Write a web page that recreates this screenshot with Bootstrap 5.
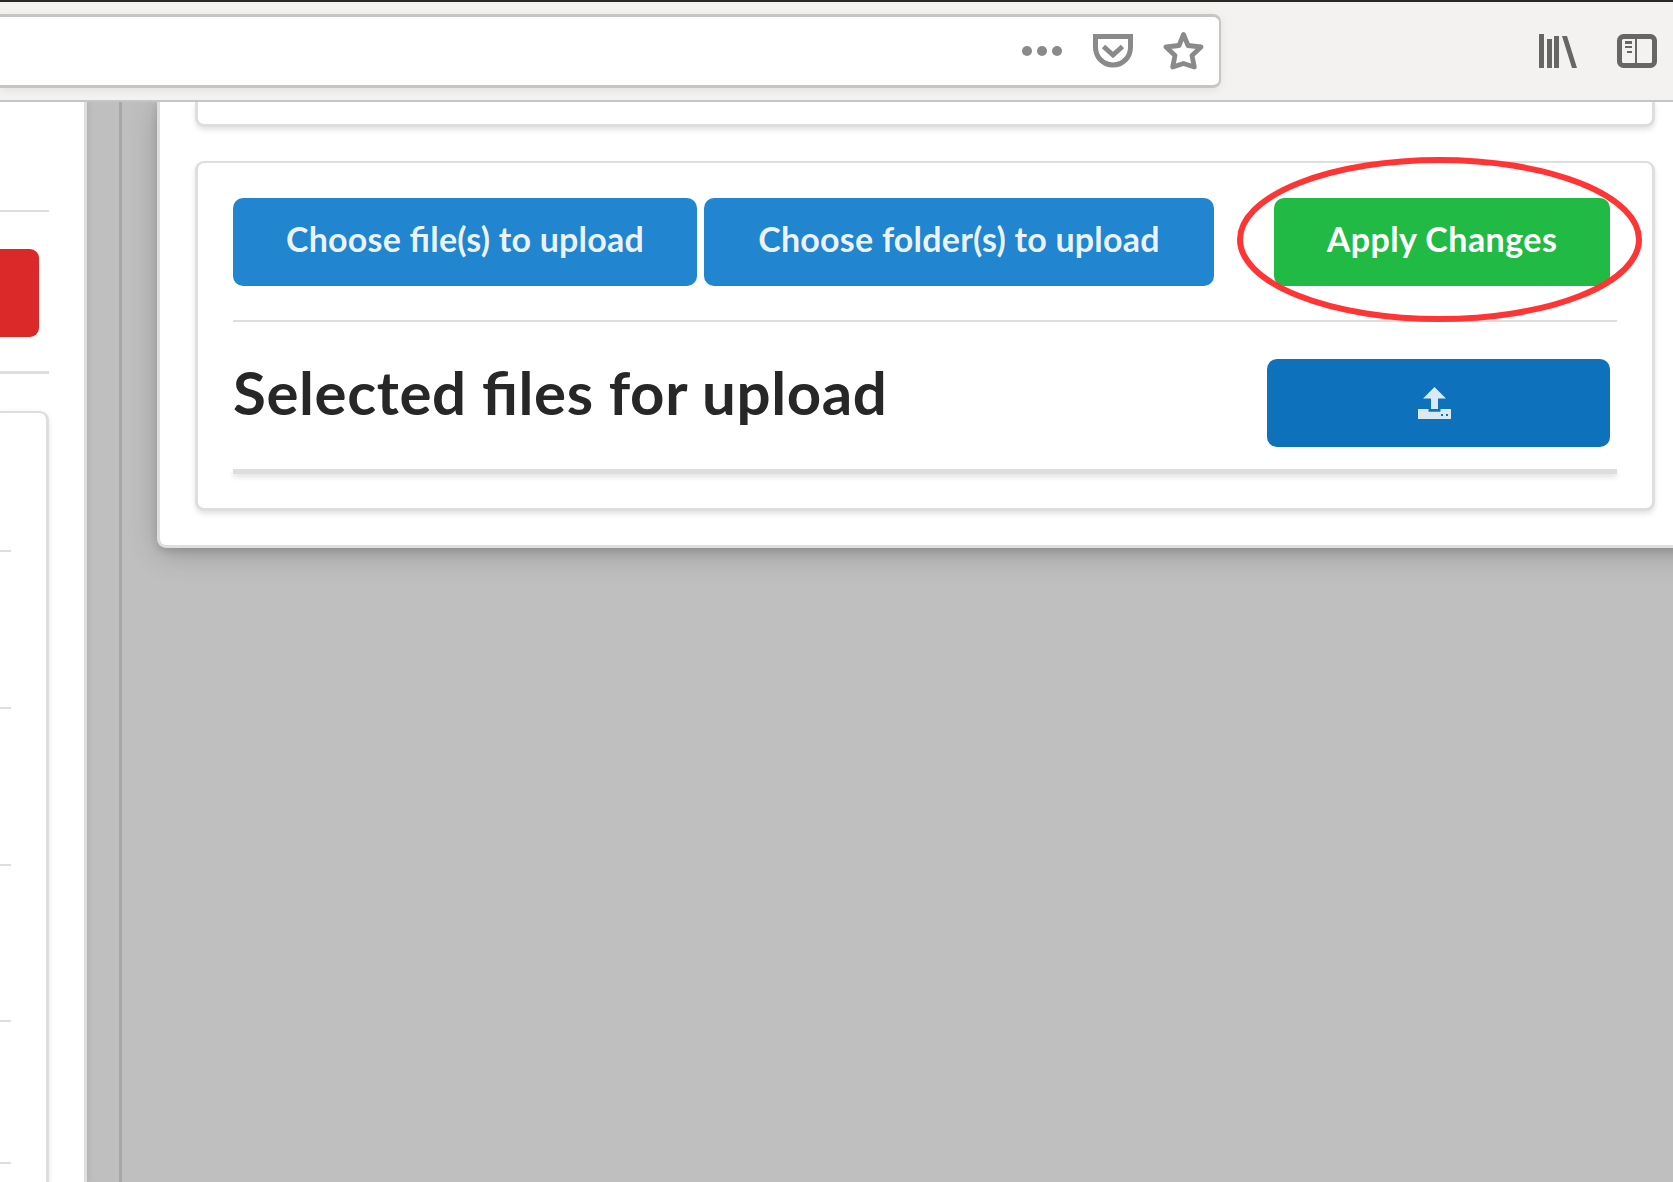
<!DOCTYPE html>
<html lang="en">
<head>
<meta charset="utf-8">
<title>Upload files</title>
<link href="https://cdn.jsdelivr.net/npm/bootstrap@5.3.0/dist/css/bootstrap.min.css" rel="stylesheet">
<style>
body{font-family:Lato,"Liberation Sans",sans-serif;height:1182px;width:1673px;background:#bfbfbf;color:#272727}
.toolbar-top{height:102px;border-top:2px solid #2b2723;border-bottom:2px solid #c6c5c3;background:#f3f2f0;padding-top:12px}
.address{width:1221px;height:74px;background:#fff;border:3px solid #c7c5c2;border-left:0;border-right-width:2px;border-radius:0 8px 8px 0;box-shadow:0 2px 10px rgba(0,0,0,.07);padding-right:15px;gap:30px}
.tools{padding-right:16px;gap:40px;height:74px}
svg{display:block;flex:none}
.side{width:87px;background:#fff;border-right:3px solid #dedede;box-shadow:0 0 7px rgba(0,0,0,.12);padding-top:108px}
.rule{height:2px;background:#dedede;width:49px;flex:none}
.rule-thick{height:3px}
.red-btn{width:39px;height:88px;background:#db2828;border:0;border-radius:0 9px 9px 0;margin:37px 0 34px}
.side-card{width:49px;margin-top:37px;border:3px solid #dedede;border-top-width:2px;border-left:0;border-bottom:0;border-radius:0 9px 0 0;box-shadow:0 2px 5px rgba(34,36,38,.12);padding-top:137px}
.side-card i{display:block;height:2px;width:11px;background:#dedede;margin-bottom:155px;flex:none}
.side-card i:nth-child(3){margin-bottom:154px}
.side-card i:nth-child(4){margin-bottom:140px}
.edge{width:35px;border-right:3px solid #a8a8a8}
.sheet{width:1551px;margin-left:35px;height:446px;background:#fff;border:3px solid #dedede;border-top:0;border-radius:0 0 9px 9px;box-shadow:1px 5px 30px rgba(0,0,0,.22),1px 3px 8px rgba(0,0,0,.14);padding:0 0 0 35px;flex:none}
.box{width:1460px;background:#fff;border:3px solid #dedede;box-shadow:0 3px 5px rgba(34,36,38,.12)}
.box-prev{height:25px;border-top:0;border-radius:0 0 9px 9px}
.box-main{height:350px;border-top-width:2px;border-radius:9px;margin-top:34px;padding:35px 35px 0}
.btn-x{height:88px;border:0;border-radius:10px;font-size:34px;font-weight:700;line-height:34px;padding:0 0 6px;color:rgba(255,255,255,.92);white-space:nowrap;letter-spacing:.22px;font-feature-settings:"liga" 1}
.b1{width:464px;background:#2185d0}
.b2{width:510px;background:#2185d0;margin-left:7px}
.b3{width:336px;background:#21ba45;margin:0 7px 0 60px;letter-spacing:.45px;color:#fff}
.b4{width:343px;background:#0d71bb;margin-right:7px;padding:0 9px 0 0}
.title-row{padding-top:37px}
.title-x{font-size:60px;font-weight:700;line-height:66px;margin:0;white-space:nowrap;letter-spacing:.6px;font-feature-settings:"liga" 1}
.line1{height:2px;background:#dedede;margin-top:34px}
.line2{height:5px;background:#dedede;margin-top:22px;box-shadow:0 3px 5px rgba(34,36,38,.14)}
.ring{position:absolute;left:23px;top:-41px;pointer-events:none}
</style>
<script src="https://cdn.jsdelivr.net/npm/bootstrap@5.3.0/dist/js/bootstrap.bundle.min.js"></script>
</head>
<body class="d-flex flex-column overflow-hidden m-0">
<header class="toolbar-top d-flex justify-content-between flex-shrink-0">
  <div class="address d-flex align-items-center justify-content-end">
    <svg width="41" height="40" fill="#8a8a8a"><circle cx="5" cy="20" r="5"/><circle cx="20" cy="20" r="5"/><circle cx="35" cy="20" r="5"/></svg>
    <svg width="40" height="40" fill="none" stroke="#8a8a8a" stroke-width="5"><path d="M2.500 5.500h35v11a17.500 17.500 0 0 1-35 0z"/><path d="M10.500 15.500l9.500 8.500 9.500-8.500"/></svg>
    <svg width="41" height="40" fill="none" stroke="#8a8a8a" stroke-width="4.800" stroke-linejoin="round"><path d="M20.500 3.500l4.500 11 13 1.500-9 8.500 2.300 11.500-10.800-3.500-10.800 3.500 2.300-11.500L3 16l13-1.500z"/></svg>
  </div>
  <div class="tools d-flex align-items-center">
    <svg width="38" height="34" fill="#666"><path d="M0 0h5v34H0zM8 5h5v29H8zM15 2h5v32h-5zM23 2h5l10 32h-5z"/></svg>
    <svg width="40" height="34"><rect x="2.500" y="2.500" width="35" height="29" rx="4" fill="none" stroke="#666" stroke-width="5"/><path d="M18 4h2v26h-2zM8 7h7v3H8zM8 12h7v2H8zM10 17h5v2h-5z" fill="#666"/></svg>
  </div>
</header>
<main class="d-flex flex-grow-1 overflow-hidden">
  <aside class="side d-flex flex-column flex-shrink-0">
    <div class="rule"></div>
    <button class="red-btn flex-shrink-0" type="button" aria-label="Delete"></button>
    <div class="rule rule-thick"></div>
    <div class="side-card flex-grow-1 overflow-hidden"><i></i><i></i><i></i><i></i><i></i></div>
  </aside>
  <div class="edge flex-shrink-0"></div>
  <section class="sheet">
    <div class="box box-prev"></div>
    <div class="box box-main">
      <div class="d-flex">
        <button type="button" class="btn btn-x b1">Choose file(s) to upload</button>
        <button type="button" class="btn btn-x b2">Choose folder(s) to upload</button>
        <div class="position-relative">
          <button type="button" class="btn btn-x b3">Apply Changes</button>
          <svg class="ring" width="405" height="165" fill="none" stroke="#ff3535" stroke-width="6"><ellipse cx="202.500" cy="82.500" rx="199.500" ry="79.500"/></svg>
        </div>
      </div>
      <div class="line1"></div>
      <div class="title-row d-flex justify-content-between">
        <h1 class="title-x">Selected files for upload</h1>
        <button type="button" class="btn btn-x b4 d-flex align-items-center justify-content-center" aria-label="Upload"><svg width="33" height="32" fill="#dce9f5"><path d="M16.500 0L28 11.500h-8V22h-7V11.500H5zM0 22h10.500v2.800h12V22H33v10H0z"/><path d="M23 27h2v2h-2zM28 27h2v2h-2z" fill="#0d71bb"/></svg></button>
      </div>
      <div class="line2"></div>
    </div>
  </section>
</main>
</body>
</html>
